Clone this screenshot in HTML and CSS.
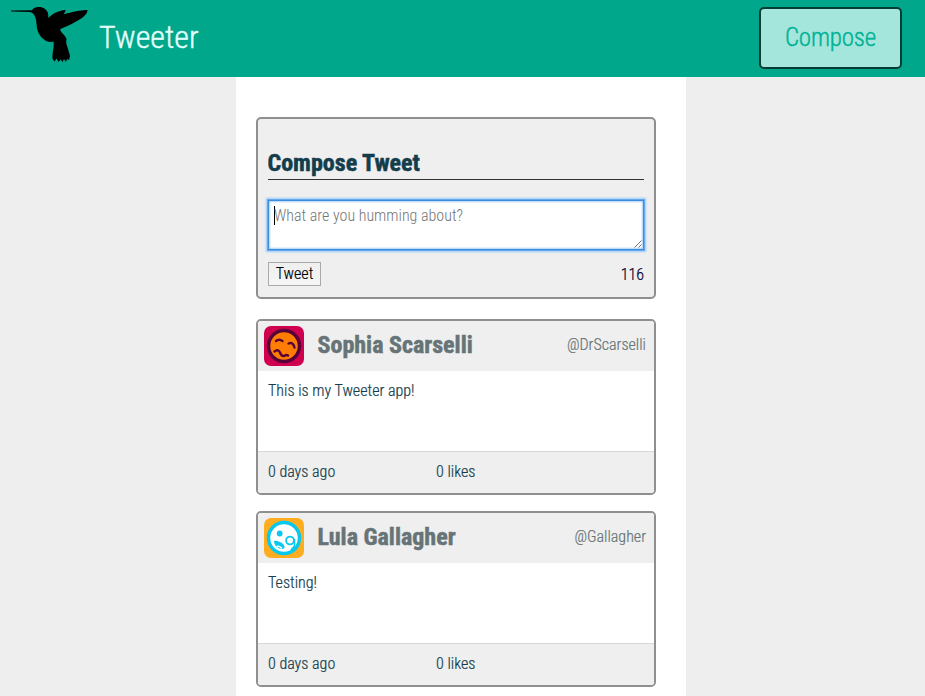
FILE: index.html
```html
<!DOCTYPE html>
<html lang="en">
<head>
<meta charset="utf-8">
<title>Tweeter</title>
<link rel="stylesheet" href="styles.css">
</head>
<body>
<nav class="nav">
  <svg class="bird" viewBox="0 0 90 66" aria-hidden="true">
    <path d="M6 8.600 L27 8.300 C29 4.500 36 4 40 7 C44 10 43 13 43.500 16 C47 12 53 8.500 60.500 8 C61 9.500 59 11 58.500 12.200 C66 10 76 8 82.500 7.900 C83 12 76 17 71 19.500 C66 22.500 60 25 55 27.300 C56 31 61 34 61.500 37 C60.500 41 62 43 63 47 L65 54 L64 58 L62 57 L61 60 L59 57 L57.500 60 L55.500 57.500 L53.500 60 L51.500 56.500 L49.500 59.500 L47.500 57 C47 50 49.500 46 48.500 39.500 C42 41.500 36 36 33.500 31 C31 25 32 20 30.500 16 C29.500 12.500 28 10.500 25 10 L6 9.500 Z"/>
  </svg>
  <span class="brand">Tweeter</span>
  <button class="compose-button">Compose</button>
</nav>
<main class="container">
  <section class="compose">
    <h2>Compose Tweet</h2>
    <div class="input"><span class="caret"></span><span class="placeholder">What are you humming about?</span>
      <svg class="grip" viewBox="0 0 8 8"><path d="M0.500 7.500L7.500 0.500M4.500 7.500L7.500 4.500"/></svg>
    </div>
    <div class="actions"><button class="submit">Tweet</button><span class="counter">116</span></div>
  </section>
  <article class="tweet">
    <header>
      <svg class="avatar" viewBox="0 0 40 40"><rect width="40" height="40" rx="7" fill="#d1004f"/><circle cx="20" cy="20" r="15.500" fill="#ff7d00" stroke="#59003b" stroke-width="3.500"/><path d="M12 15Q15 12.500 18.500 15M24.500 17.500Q29 15.500 30.500 21.500M10.500 25.500Q14 22.500 16 26.500Q17.500 31 20.500 29.800Q22.500 28.500 24 29.500" fill="none" stroke="#59003b" stroke-width="2.400" stroke-linecap="round"/></svg>
      <h2>Sophia Scarselli</h2><span class="handle">@DrScarselli</span>
    </header>
    <p>This is my Tweeter app!</p>
    <footer><span>0 days ago</span><span>0 likes</span></footer>
  </article>
  <article class="tweet">
    <header>
      <svg class="avatar" viewBox="0 0 40 40"><rect width="40" height="40" rx="7" fill="#ffad1f"/><circle cx="20" cy="20" r="15.500" fill="#fff" stroke="#08c8ed" stroke-width="3.500"/><circle cx="15.700" cy="15.500" r="2.900" fill="#08c8ed"/><path d="M10 23C15 22 21 26.500 20.500 29.500C19.500 33 10 30 10 23Z" fill="#08c8ed"/><path d="M13 28.500Q15.500 27.500 18 30.500" fill="none" stroke="#fff" stroke-width="1.400"/><circle cx="26" cy="22.500" r="3.900" fill="none" stroke="#08c8ed" stroke-width="1.800"/><path d="M30.500 21V28L27 32" fill="none" stroke="#08c8ed" stroke-width="1.500"/></svg>
      <h2>Lula Gallagher</h2><span class="handle">@Gallagher</span>
    </header>
    <p>Testing!</p>
    <footer><span>0 days ago</span><span>0 likes</span></footer>
  </article>
</main>
</body>
</html>
```
FILE: styles.css
```css
* { box-sizing: border-box; }
body { margin: 0; height: 696px; overflow: hidden; background: #eee; color: #143d4c; font: 300 16px/20px "Roboto Condensed", Roboto, sans-serif; font-stretch: 75%; -webkit-text-stroke: 0.2px; }
button { font: inherit; font-stretch: inherit; }
h2 { margin: 0; font-size: 24px; font-weight: 700; line-height: 28px; -webkit-text-stroke: 0.5px; }
.compose h2, .tweet h2 { text-indent: -0.5px; }
.nav { height: 77px; background: #00a78b; display: flex; align-items: flex-start; padding: 2px 23px 0 5px; }
.bird { width: 90px; height: 66px; }
.brand { margin: 15px 0 0 4px; font-size: 32px; line-height: 40px; color: #e3fffb; -webkit-text-stroke: 0.4px; }
.compose-button { margin: 5px 0 0 auto; width: 143px; height: 62px; padding: 0; border: 2px solid #063d32; border-radius: 5px; background: #a5e6dc; color: #00b294; font-size: 25px; letter-spacing: -0.2px; -webkit-text-stroke: 0.4px; }
.container { width: 450px; height: 619px; margin-left: 236px; padding: 40px 30px 0 20px; background: #fff; }
.compose { height: 182px; border: 2px solid #8f8f8f; border-radius: 5px; background: #efefef; padding: 30px 10px 0; margin-bottom: 20px; }
.compose h2 { height: 31px; border-bottom: 1px solid #333; }
.input { display: flex; position: relative; width: 376px; height: 50px; margin-top: 20px; background: #fff; border: 1px solid #3b8de0; box-shadow: 0 0 0 1px #66a9ee, 0 0 2px 2px #9bc9f7, inset 0 0 2px 1px #a9d0f8; padding: 5px; }
.caret { width: 1px; height: 19px; background: #000; }
.placeholder { color: #757575; margin-left: -1px; -webkit-text-stroke: 0; }
.grip { position: absolute; right: 1px; bottom: 1px; width: 8px; height: 8px; fill: none; stroke: #555; stroke-width: 0.8; }
.actions { display: flex; justify-content: space-between; margin-top: 12px; }
.submit { width: 53px; height: 24px; padding: 0; border: 1px solid #aaa; background: linear-gradient(#eee, #f6f6f6); color: #000; line-height: 20px; }
.counter { margin-top: 3px; color: #000033; }
.tweet { height: 176px; border: 2px solid #8f8f8f; border-radius: 5px; margin-bottom: 16px; overflow: hidden; }
.tweet header { display: flex; align-items: center; height: 50px; padding: 0 8px 3px 6px; background: #efefef; color: #667477; }
.avatar { width: 40px; height: 40px; margin-top: 3px; }
.tweet h2 { margin-left: 14px; }
.handle { margin-left: auto; }
.tweet p { margin: 0; height: 80px; padding: 10px; }
.tweet footer { display: flex; height: 42px; border-top: 1px solid #d5d9d8; background: #efefef; padding: 10px 10px 0; }
.tweet footer span { width: 168px; }
```
